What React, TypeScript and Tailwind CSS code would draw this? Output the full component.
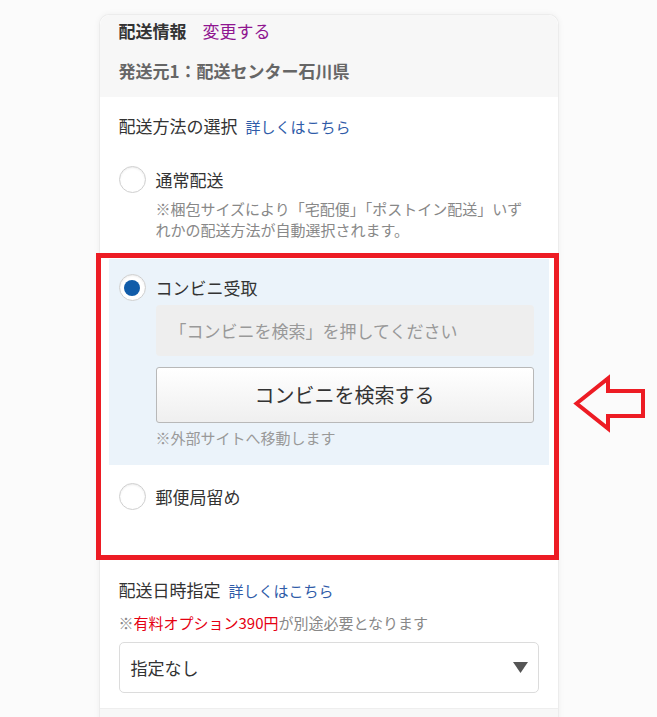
import React from 'react';

function Radio({ checked }: { checked?: boolean }) {
  return (
    <span className="flex h-[27px] w-[27px] shrink-0 items-center justify-center rounded-full border border-[#cfcfcf] bg-white shadow-[inset_0_1px_2px_rgba(0,0,0,0.08)]">
      {checked && <span className="h-[16px] w-[16px] rounded-full bg-[#115ca9]" />}
    </span>
  );
}

function Arrow() {
  return (
    <svg width="97" height="90" viewBox="0 0 97 90" className="absolute left-[560px] top-[360px]">
      <polygon
        points="16.5,43.5 48,18.5 48,31 83,31 83,56 48,56 48,68.5"
        fill="none"
        stroke="#ed1c24"
        strokeWidth="4"
        strokeLinejoin="miter"
      />
    </svg>
  );
}

export default function App() {
  return (
    <div
      className="relative h-[717px] w-full overflow-hidden bg-[#fbfbfb] pt-[14px] text-[#333]"
      style={{ fontFamily: '"Noto Sans CJK JP", "Noto Sans", sans-serif' }}
    >
      <div className="relative mx-auto w-[460px] rounded-t-[10px] border border-b-0 border-[#ececec] bg-white shadow-[0_0_6px_rgba(0,0,0,0.05)]">
        {/* Header */}
        <div className="rounded-t-[10px] bg-[#f7f7f7] px-[19px] pb-[13px] pt-[3px]">
          <div className="flex items-center gap-[16px] text-[17px] leading-[26px]">
            <span className="font-bold">配送情報</span>
            <a href="#" className="text-[#8f1590]">変更する</a>
          </div>
          <div className="mt-[14px] text-[17px] font-bold leading-[26px] text-[#666]">
            発送元1：配送センター石川県
          </div>
        </div>

        {/* Shipping method */}
        <div className="pt-[16px]">
          <div className="flex items-baseline gap-[8px] px-[19px]">
            <span className="text-[17px] leading-[26px]">配送方法の選択</span>
            <a href="#" className="text-[15px] text-[#2f5ba8]">詳しくはこちら</a>
          </div>

          <div className="mt-[27px] px-[19px]">
            <div className="flex items-center gap-[10px]">
              <Radio />
              <span className="text-[17px] leading-[26px]">通常配送</span>
            </div>
            <p className="ml-[37px] mr-[14px] mt-[5px] text-[15px] leading-[21px] text-[#888]">
              ※梱包サイズにより「宅配便」「ポストイン配送」いずれかの配送方法が自動選択されます。
            </p>
          </div>

          <div className="mx-[9px] mt-[19px] bg-[#ebf3fa] px-[10px] pb-[17px] pt-[15px]">
            <div className="flex items-center gap-[10px]">
              <Radio checked />
              <span className="text-[17px] leading-[26px]">コンビニ受取</span>
            </div>
            <div className="ml-[37px] mr-[5px]">
              <div className="mt-[4px] flex h-[51px] items-center rounded-[4px] bg-[#eeeeee] px-[14px] text-[17px] text-[#999]">
                「コンビニを検索」を押してください
              </div>
              <button className="mt-[11px] flex h-[56px] w-full items-center justify-center rounded-[3px] border border-[#b8b8b8] bg-gradient-to-b from-white to-[#efefef] text-[20px] text-[#333]">
                コンビニを検索する
              </button>
              <p className="mt-[4px] text-[15px] leading-[21px] text-[#999]">※外部サイトへ移動します</p>
            </div>
          </div>

          <div className="mt-[18px] flex items-center gap-[10px] px-[19px]">
            <Radio />
            <span className="text-[17px] leading-[26px]">郵便局留め</span>
          </div>
        </div>

        {/* Delivery date */}
        <div className="px-[19px] pb-[15px] pt-[67px]">
          <div className="flex items-baseline gap-[8px]">
            <span className="text-[17px] leading-[26px]">配送日時指定</span>
            <a href="#" className="text-[15px] text-[#2f5ba8]">詳しくはこちら</a>
          </div>
          <p className="mt-[9px] text-[15px] leading-[21px] text-[#888]">
            ※<span className="text-[#e50012]">有料オプション390円</span>が別途必要となります
          </p>
          <div className="mt-[9px] flex h-[51px] items-center justify-between rounded-[5px] border border-[#dcdcdc] bg-white pl-[11px] pr-[10px]">
            <span className="text-[17px]">指定なし</span>
            <svg width="15" height="11" viewBox="0 0 15 11">
              <polygon points="0,0 15,0 7.5,11" fill="#555" />
            </svg>
          </div>
        </div>
        <div className="h-[20px] border-t border-[#eeeeee] bg-[#f7f7f7]" />

        {/* Annotation box */}
        <div className="pointer-events-none absolute left-[-4px] top-[238px] h-[307px] w-[463px] border-[5px] border-[#ed1c24]" />
      </div>
      <Arrow />
    </div>
  );
}
